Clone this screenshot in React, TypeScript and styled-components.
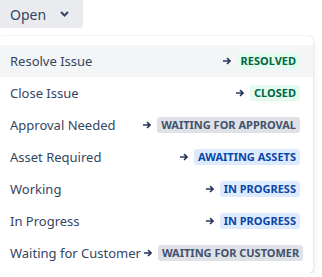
import React from 'react';
import styled, { createGlobalStyle } from 'styled-components';

type Tone = 'green' | 'gray' | 'blue';

const transitions: { label: string; status: string; tone: Tone; active?: boolean }[] = [
  { label: 'Resolve Issue', status: 'Resolved', tone: 'green', active: true },
  { label: 'Close Issue', status: 'Closed', tone: 'green' },
  { label: 'Approval Needed', status: 'Waiting for approval', tone: 'gray' },
  { label: 'Asset Required', status: 'Awaiting assets', tone: 'blue' },
  { label: 'Working', status: 'In progress', tone: 'blue' },
  { label: 'In Progress', status: 'In progress', tone: 'blue' },
  { label: 'Waiting for Customer', status: 'Waiting for customer', tone: 'gray' },
];

const tones = {
  green: { bg: '#e3fcef', fg: '#006644' },
  gray: { bg: '#dfe1e6', fg: '#42526e' },
  blue: { bg: '#deebff', fg: '#0747a6' },
};

const GlobalStyle = createGlobalStyle`
  body {
    margin: 0;
    background: #ffffff;
    font-family: "Segoe UI", "Noto Sans", "Liberation Sans", sans-serif;
    overflow: hidden;
  }
`;

const Page = styled.div`
  display: flex;
  flex-direction: column;
  align-items: flex-start;
  gap: 8px;
`;

const StatusButton = styled.button`
  display: flex;
  align-items: center;
  gap: 14px;
  height: 28px;
  width: 83px;
  padding: 0 0 0 10px;
  border: none;
  border-radius: 0 0 3px 0;
  background: #e9ebee;
  color: #344563;
  font-family: inherit;
  font-size: 14px;
  cursor: pointer;
`;

const Menu = styled.div`
  margin-left: -2px;
  width: 315px;
  padding: 9px 0 4px;
  background: #ffffff;
  border-radius: 4px;
  box-shadow: 0 4px 8px -2px rgba(9, 30, 66, 0.2), 0 0 1px rgba(9, 30, 66, 0.35);
`;

const Row = styled.div<{ $active?: boolean }>`
  display: flex;
  align-items: center;
  justify-content: space-between;
  gap: 3px;
  height: 32px;
  padding: 0 13px 0 12px;
  background: ${({ $active }) => ($active ? '#f4f5f7' : 'transparent')};
  color: #344563;
  font-size: 13px;
  white-space: nowrap;
`;

const Target = styled.span`
  display: flex;
  align-items: center;
  gap: 6px;
  color: #253858;
`;

const Lozenge = styled.span<{ $tone: Tone }>`
  padding: 0 4px;
  height: 16px;
  line-height: 16px;
  border-radius: 3px;
  background: ${({ $tone }) => tones[$tone].bg};
  color: ${({ $tone }) => tones[$tone].fg};
  font-size: 11px;
  font-weight: 700;
  text-transform: uppercase;
`;

const Arrow = () => (
  <svg width="8" height="8" viewBox="0 0 8 8" fill="none" stroke="currentColor" strokeWidth="1.6">
    <path d="M0 4h7M4 1l3 3-3 3" />
  </svg>
);

const Chevron = () => (
  <svg width="9" height="6" viewBox="0 0 9 6" fill="none" stroke="currentColor" strokeWidth="2">
    <path d="M1 1l3.5 3.5L8 1" />
  </svg>
);

export default function App() {
  return (
    <Page>
      <GlobalStyle />
      <StatusButton>
        Open
        <Chevron />
      </StatusButton>
      <Menu>
        {transitions.map((t) => (
          <Row key={t.label} $active={t.active}>
            <span>{t.label}</span>
            <Target>
              <Arrow />
              <Lozenge $tone={t.tone}>{t.status}</Lozenge>
            </Target>
          </Row>
        ))}
      </Menu>
    </Page>
  );
}
